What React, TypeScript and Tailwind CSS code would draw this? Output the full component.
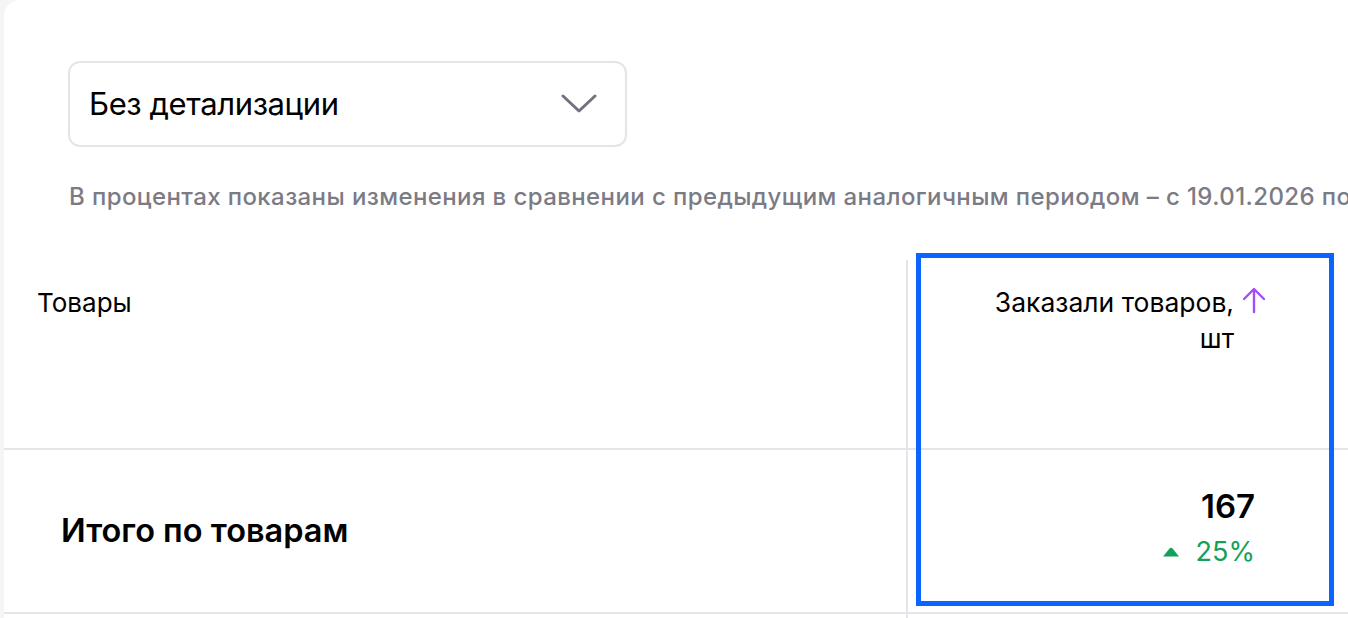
import React from "react";

export default function App() {
  const font = { fontFamily: "Inter, 'Noto Sans', sans-serif" };
  return (
    <div className="w-[1348px] h-[618px] bg-[#f5f5f7] pl-[4px] overflow-hidden" style={font}>
      <div className="relative h-full bg-white rounded-tl-[16px] overflow-hidden">
        <div className="pt-[61px] pl-[64px]">
          <div className="w-[559px] h-[86px] border-2 border-[#e4e4ea] rounded-[12px] flex items-center justify-between pl-[19px] pr-[28px]">
            <span className="text-[31px] leading-[36px] text-black tracking-[-0.4px]">Без детализации</span>
            <svg width="36" height="22" viewBox="0 0 36 22" fill="none">
              <path d="M2 3 L18 18 L34 3" stroke="#71717f" strokeWidth="3" strokeLinecap="round" strokeLinejoin="round" />
            </svg>
          </div>
        </div>
        <div className="mt-[36px] pl-[65px] whitespace-nowrap text-[24px] leading-[28px] text-[#7b7b85] font-medium tracking-[0.4px]">
          В процентах показаны изменения в сравнении с предыдущим аналогичным периодом – с 19.01.2026 по 25.01.2026
        </div>
        <div className="mt-[49px]">
          <div className="flex h-[190px] border-b-2 border-[#e4e4ea]">
            <div className="w-[902px] pl-[33px] pt-[25px] text-[26px] leading-[36px] text-black">Товары</div>
            <div className="w-[2px] bg-[#e4e4ea]" />
            <div className="flex-1 pt-[24px] pr-[80px] flex justify-end">
              <div className="text-right text-[26.5px] leading-[36px] text-black">
                Заказали товаров,
                <br />
                шт
              </div>
              <svg width="28" height="28" viewBox="0 0 28 28" fill="none" className="ml-[6px] mt-[2px]">
                <path d="M14 26 V4 M4 13 L14 3 L24 13" stroke="#a04dff" strokeWidth="2.4" strokeLinecap="round" strokeLinejoin="round" />
              </svg>
            </div>
          </div>
          <div className="flex h-[164px] border-b-2 border-[#e4e4ea]">
            <div className="w-[902px] pl-[57px] flex items-center text-[32.5px] font-semibold text-black">Итого по товарам</div>
            <div className="w-[2px] bg-[#e4e4ea]" />
            <div className="flex-1 pr-[93px] flex flex-col items-end justify-center pb-[8px]">
              <div className="text-[33px] leading-[40px] font-semibold text-black">167</div>
              <div className="flex items-center mt-[10px] text-[27px] leading-[32px] text-[#14a05a]">
                <svg width="18" height="10" viewBox="0 0 18 10" className="mr-[16px]">
                  <path d="M1 9.5 L7.5 1.5 Q9 0 10.5 1.5 L17 9.5 Z" fill="#14a05a" />
                </svg>
                25%
              </div>
            </div>
          </div>
          <div className="flex h-[20px]">
            <div className="w-[902px]" />
            <div className="w-[2px] bg-[#e4e4ea]" />
          </div>
        </div>
        <div className="absolute left-[912px] top-[253px] w-[418px] h-[353px] border-[5px] border-[#0a64ff]" />
      </div>
    </div>
  );
}
